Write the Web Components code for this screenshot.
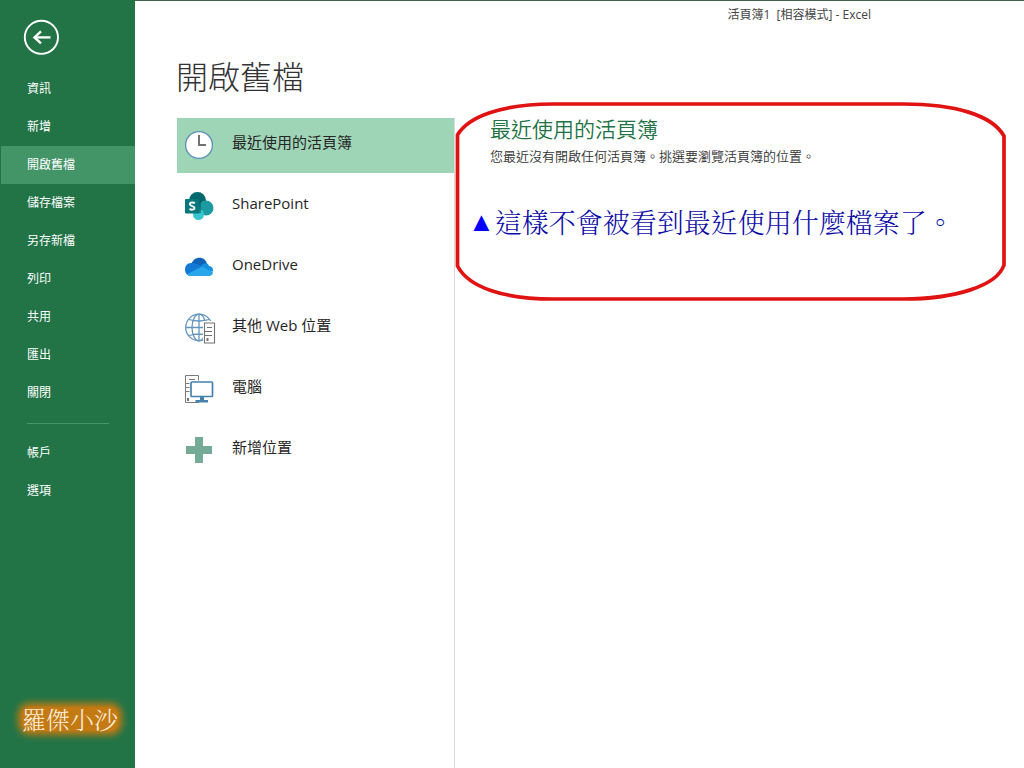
<!DOCTYPE html>
<html lang="zh-Hant">
<head>
<meta charset="utf-8">
<meta name="viewport" content="width=device-width, initial-scale=1">
<title>活頁簿1 [相容模式] - Excel</title>
<style>
  html, body { margin: 0; height: 100%; }
  body { font-family: "Open Sans", "Noto Sans CJK TC", sans-serif; color: #262626; background: #fff; }
</style>
</head>
<body>
<backstage-app></backstage-app>
<script>
const define = (name, html) => {
  const template = document.createElement('template');
  template.innerHTML = html;
  customElements.define(name, class extends HTMLElement {
    constructor() {
      super();
      this.attachShadow({ mode: 'open' }).append(template.content.cloneNode(true));
    }
  });
};

define('back-button', `
<style>
  :host { display: block; }
  button { display: block; padding: 0; border: 0; background: none; color: #fff; cursor: pointer; }
  svg { display: block; }
</style>
<button type="button" aria-label="返回">
  <svg width="36" height="36" viewBox="0 0 36 36" fill="none" stroke="currentColor">
    <circle cx="18.400" cy="18.300" r="16.600" stroke-width="1.900"/>
    <path d="M27.500 18.400H11.500" stroke-width="2.300"/>
    <path d="M18 12.400L11.500 18.400l6.500 6" stroke-width="2.400"/>
  </svg>
</button>`);

define('nav-item', `
<style>
  :host { display: block; }
  button { display: block; width: 100%; height: 38px; padding: 0 0 0 26px; border: 0; background: none;
    color: #fff; font: inherit; font-size: 12px; line-height: 38px; text-align: left; cursor: pointer; }
  :host([selected]) button { background: #439467; }
</style>
<button type="button"><slot></slot></button>`);

define('author-mark', `
<style>
  :host { display: block; font-family: "Noto Serif CJK TC", "Noto Sans CJK TC", serif; font-size: 24px; line-height: 32px; font-weight: 300; color: #fbeedb; white-space: nowrap; }
  span { display: inline-block; border-radius: 8px; background: #c47a12; box-shadow: 0 0 7px 4px #c47a12; line-height: 24px; }
</style>
<span><slot></slot></span>`);

define('side-nav', `
<style>
  :host { display: flex; flex-direction: column; box-sizing: border-box; width: 135px; flex: none;
    padding: 19px 0 33px 1px; background: #227447; }
  back-button { margin: 0 0 15px 22px; }
  hr { width: 82px; height: 1px; margin: 11px 0 10px 26px; border: 0; background: #439467; }
  author-mark { margin: auto 0 0 21px; }
</style>
<back-button></back-button>
<nav-item>資訊</nav-item>
<nav-item>新增</nav-item>
<nav-item selected>開啟舊檔</nav-item>
<nav-item>儲存檔案</nav-item>
<nav-item>另存新檔</nav-item>
<nav-item>列印</nav-item>
<nav-item>共用</nav-item>
<nav-item>匯出</nav-item>
<nav-item>關閉</nav-item>
<hr>
<nav-item>帳戶</nav-item>
<nav-item>選項</nav-item>
<author-mark>羅傑小沙</author-mark>`);

define('place-item', `
<style>
  :host { display: block; }
  button { display: flex; width: 100%; height: 55px; padding: 0 8px 2px; gap: 15px; align-items: center; border: 0;
    background: none; color: inherit; font: inherit; font-size: 15px; line-height: 20px; text-align: left; cursor: pointer; }
  :host([selected]) button { background: #9fd5b7; }
  .label { padding-bottom: 5px; white-space: nowrap; }
  ::slotted(svg) { display: block; flex: none; }
</style>
<button type="button"><slot name="icon"></slot><span class="label"><slot></slot></span></button>`);

define('place-list', `
<style>
  :host { display: flex; flex-direction: column; gap: 6px; width: 277px; flex: none; }
</style>
<place-item selected>
  <svg slot="icon" width="32" height="32" viewBox="0 0 32 32">
    <circle cx="14" cy="16" r="13.400" fill="#fff" stroke="#5b8fb5" stroke-width="1.300"/>
    <path d="M14 6v10h7" fill="none" stroke="#737373" stroke-width="2"/>
  </svg>最近使用的活頁簿</place-item>
<place-item>
  <svg slot="icon" width="32" height="32" viewBox="0 0 32 32">
    <circle cx="12.500" cy="10.500" r="8.500" fill="#03696c"/>
    <circle cx="21" cy="18" r="7.500" fill="#1b9ba1"/>
    <circle cx="13.500" cy="24.500" r="5.500" fill="#37c6d0"/>
    <path d="M8 10h8v13H8z" fill="#024f52" opacity=".5"/>
    <rect y="9" width="14.500" height="14.500" rx="1" fill="#06777b"/>
    <path d="M9.900 13.300C8.200 12 4.800 12.300 4.900 14.300c.1 2.100 4.800 1.500 4.700 3.700-.1 2-3.400 2.100-5.100.9" fill="none" stroke="#fff" stroke-width="1.900"/>
  </svg>SharePoint</place-item>
<place-item>
  <svg slot="icon" width="32" height="32" viewBox="0 0 32 32">
    <path d="M6 14C8 5 20 4 22 13l-8 7z" fill="#0f62b8"/>
    <path d="M6 12C2 12 0 15 0 18.500c0 3.500 2 6.500 6 6.500l13-9-7-3C10 12 8 11.700 6 12z" fill="#1279d4"/>
    <path d="M16 15c2-3 7-4 8 0 3 0 4.300 3 4.300 5.500L22 21z" fill="#1590df"/>
    <path d="M2 23.300L17 15.500 28 21.500c-.2 2-1.800 3.500-4 3.500H6c-2 0-3-.7-4-1.700z" fill="#28a8ea"/>
  </svg>OneDrive</place-item>
<place-item>
  <svg slot="icon" width="32" height="32" viewBox="0 0 32 32" fill="none">
    <g stroke="#6595bd" stroke-width="1.300">
      <circle cx="14" cy="15.500" r="13.300"/>
      <ellipse cx="14" cy="15.500" rx="7" ry="13.300"/>
      <path d="M14 2v27M1 15.500h26M4 7.500q10 3 20 0M4 23.500q10-3 20 0"/>
    </g>
    <path d="M18 9h14v23H18z" fill="#fff"/>
    <path d="M19.500 11h10v20h-10zM22 15.500h5M20 19.500h7M20 23.500h7" stroke="#737373" stroke-width="1.100"/>
    <path d="M21.500 26h2v3h-2z" fill="#737373"/>
  </svg>其他 Web 位置</place-item>
<place-item>
  <svg slot="icon" width="32" height="32" viewBox="0 0 32 32" fill="none">
    <path d="M.500 2.500h13v27H.500zM4 6.500h6M1 10.500h5M1 14.500h4M1 18.500h4" stroke="#7b7b7b"/>
    <path d="M2 25h2v3H2z" fill="#737373"/>
    <path d="M4.500 7.500h25v21.500h-25z" fill="#fff"/>
    <rect x="6" y="9" width="21.500" height="14.500" rx="1" fill="#fff" stroke="#4682ad" stroke-width="1.700"/>
    <path d="M15 24h4v3h4v2.500H10.500V27H15z" fill="#4682ad"/>
    <path d="M1 10.500h3M1 29.500h7M13.500 3v4" stroke="#7b7b7b"/>
  </svg>電腦</place-item>
<place-item>
  <svg slot="icon" width="32" height="32" viewBox="0 0 32 32">
    <path d="M10 3h8v9h9v8h-9v9h-8v-9H1v-8h9z" fill="#75ab96"/>
  </svg>新增位置</place-item>`);

define('callout-frame', `
<style>
  :host { display: block; position: relative; }
  .outline { position: absolute; inset: 0; width: 100%; height: 100%; overflow: visible; pointer-events: none; }
</style>
<slot></slot>
<svg class="outline" viewBox="0 0 550 200" preserveAspectRatio="none" fill="none" aria-hidden="true">
  <path d="M2.500 34C13 16 46 3 98 3H448C500 3 537 14 549 35V164C542 185 500 198 448 198H98C50 198 14 187 2.500 165Z" stroke="#e01212" stroke-width="3.700"/>
</svg>`);

define('recent-panel', `
<style>
  :host { display: block; flex: 1; min-width: 0; border-left: 1px solid #d9dcdb; }
  callout-frame { height: 200px; margin: -17px 19px 0 0; box-sizing: border-box; padding: 14px 0 0 35px; }
  h2 { margin: 0; font-size: 21px; line-height: 28px; font-weight: 350; color: #217346; }
  p { margin: 0; white-space: nowrap; }
  .hint { font-size: 13px; line-height: 26px; font-weight: 350; color: #333; }
  .note { display: flex; margin: 33px 0 0 -22px;
    font-family: "Noto Serif CJK TC", "Noto Sans CJK TC", serif; font-size: 27px; line-height: 40px; font-weight: 300; color: #0c0ca8; }
  .mark { font-size: 27px; color: #00f; font-family: "DejaVu Sans", sans-serif; }
</style>
<callout-frame>
  <h2>最近使用的活頁簿</h2>
  <p class="hint">您最近沒有開啟任何活頁簿。挑選要瀏覽活頁簿的位置。</p>
  <p class="note"><span class="mark">▲</span><span>這樣不會被看到最近使用什麼檔案了。</span></p>
</callout-frame>`);

define('backstage-app', `
<style>
  :host { display: flex; min-height: 100vh; }
  main { display: flex; flex-direction: column; flex: 1; min-width: 0; box-sizing: border-box; border-top: 1px solid #3c6650; }
  header { padding: 4px 153px 0 0; font-size: 12px; line-height: 20px; text-align: right; white-space: pre; color: #444; }
  h1 { margin: 28px 0 0 41px; font-size: 32px; line-height: 48px; font-weight: 300; color: #333; }
  .body { display: flex; flex: 1; margin: 17px 0 0 42px; }
</style>
<side-nav></side-nav>
<main>
  <header>活頁簿1  [相容模式] - Excel</header>
  <h1>開啟舊檔</h1>
  <div class="body">
    <place-list></place-list>
    <recent-panel></recent-panel>
  </div>
</main>`);
</script>
</body>
</html>
